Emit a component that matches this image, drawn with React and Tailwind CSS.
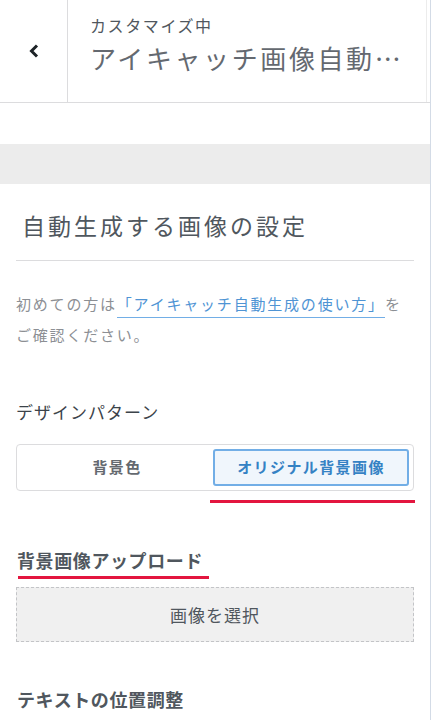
import React from 'react';

const jp = { fontFamily: '"Noto Sans CJK JP", "Noto Sans", sans-serif' };

const App = () => {
    return (
        <div className="w-[435px] h-[720px] bg-white overflow-hidden" style={jp}>
            <div className="w-[431px] h-full border-r border-[#d3dbe6] flex flex-col">
                {/* Header */}
                <div className="h-[103px] flex border-b border-[#dcdcde] shrink-0">
                    <button className="w-[68px] border-r border-[#dcdcde] flex items-center justify-center text-[#1d2327]">
                        <svg width="14" height="16" viewBox="0 0 14 16" fill="none">
                            <path d="M10 2.5 L4.5 8 L10 13.5" stroke="currentColor" strokeWidth="3" />
                        </svg>
                    </button>
                    <div className="flex-1 pl-[22px] pt-[12px] border-r border-[#ececec] mr-[3px]">
                        <div className="text-[16px] leading-[26px] tracking-[1.6px] text-[#50575e]">カスタマイズ中</div>
                        <div className="text-[26px] leading-[40px] tracking-[2.6px] text-[#646970] whitespace-nowrap">アイキャッチ画像自動…</div>
                    </div>
                </div>

                <div className="h-[41px] shrink-0" />
                <div className="h-[40px] bg-[#ececec] shrink-0" />

                {/* Section */}
                <div className="px-4">
                    <h2 className="pl-[6px] pt-[26px] pb-[20px] text-[23px] leading-[30px] tracking-[3px] text-[#50575e] border-b border-[#dcdcde]">
                        自動生成する画像の設定
                    </h2>

                    <p className="pt-[27px] text-[15px] leading-[31px] tracking-[1.8px] text-[#8c8f94]">
                        初めての方は
                        <a className="text-[#4f94d4] border-b border-[#72aee6] pb-[3px]">「アイキャッチ自動生成の使い方」</a>
                        を<br />ご確認ください。
                    </p>

                    <div className="pt-[50px] text-[17px] leading-[24px] tracking-[1px] text-[#3c434a]">デザインパターン</div>

                    <div className="mt-[20px] flex p-[4px] border border-[#dcdcde] rounded-[4px] h-[47px]">
                        <button className="flex-1 text-[15px] font-bold tracking-[1.4px] text-[#646970]">背景色</button>
                        <button className="w-[196px] border-2 border-[#72aee6] rounded-[3px] bg-[#f0f6fc] text-[15px] font-bold tracking-[1.4px] text-[#3582c4]">
                            オリジナル背景画像
                        </button>
                    </div>
                    <div className="flex justify-end">
                        <div className="w-[205px] h-[3px] bg-[#e3163f] mt-[9px] -mr-[1px]" />
                    </div>

                    <div className="pt-[45px] inline-block">
                        <div className="pl-[1px] text-[18px] font-bold leading-[24px] tracking-[0.6px] text-[#50575e]">背景画像アップロード</div>
                        <div className="ml-[2px] w-[191px] h-[3px] bg-[#e3163f] mt-[4px]" />
                    </div>

                    <button className="mt-[8px] w-full h-[55px] bg-[#f0f0f0] border border-dashed border-[#c3c4c7] text-[17px] tracking-[1px] text-[#50575e]">
                        画像を選択
                    </button>

                    <div className="pt-[45px] pl-[1px] text-[18px] font-bold leading-[24px] tracking-[0.6px] text-[#50575e]">テキストの位置調整</div>
                </div>
            </div>
        </div>
    );
};

export default App;
